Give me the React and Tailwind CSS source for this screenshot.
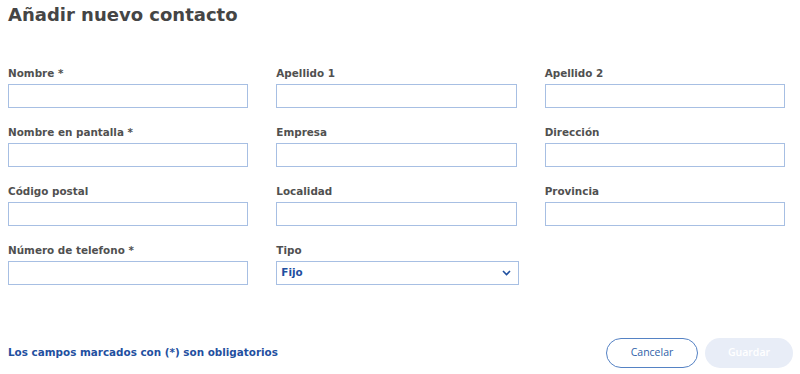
const fields = [
  { label: "Nombre *" },
  { label: "Apellido 1" },
  { label: "Apellido 2" },
  { label: "Nombre en pantalla *" },
  { label: "Empresa" },
  { label: "Dirección" },
  { label: "Código postal" },
  { label: "Localidad" },
  { label: "Provincia" },
  { label: "Número de telefono *" },
  { label: "Tipo", select: true },
];

function Field({ label, select }) {
  return (
    <div className="flex flex-col">
      <label className="h-[14px] text-[10.4px] font-bold leading-[14px] text-[#505050]">{label}</label>
      {select ? (
        <div className="mt-[4px] flex h-[24px] w-[243px] items-center justify-between border border-[#a7bfe3] bg-white pl-[4px] pr-[7px]">
          <span className="text-[10.4px] font-bold text-[#1f50a0]">Fijo</span>
          <svg width="9" height="6" viewBox="0 0 9 6" fill="none">
            <path d="M1 1l3.5 3.5L8 1" stroke="#1f50a0" strokeWidth="1.6" />
          </svg>
        </div>
      ) : (
        <input className="mt-[4px] h-[24px] w-full border border-[#a7bfe3] bg-white outline-none" />
      )}
    </div>
  );
}

export default function App() {
  return (
    <div className="h-[374px] w-[800px] bg-white pl-[8px] pr-[15px]" style={{ fontFamily: '"DejaVu Sans", sans-serif' }}>
      <h1 className="pt-[2px] text-[18px] font-bold leading-[26px] text-[#454545]">Añadir nuevo contacto</h1>
      <div className="mt-[38px] grid grid-cols-3 gap-x-[28px] gap-y-[17px]">
        {fields.map((f) => (
          <Field key={f.label} {...f} />
        ))}
      </div>
      <div className="mt-[53px] flex items-center justify-between">
        <span className="text-[10.4px] font-bold text-[#1f50a0]">Los campos marcados con (*) son obligatorios</span>
        <div className="-mr-[8px] flex gap-[7px]" style={{ fontFamily: '"Open Sans", sans-serif' }}>
          <button className="h-[30px] w-[92px] rounded-full border border-[#5582c4] text-[10.5px] text-[#2f5fa8]">Cancelar</button>
          <button className="h-[30px] w-[88px] rounded-full bg-[#e8edf7] text-[10.5px] font-semibold text-white">Guardar</button>
        </div>
      </div>
    </div>
  );
}
